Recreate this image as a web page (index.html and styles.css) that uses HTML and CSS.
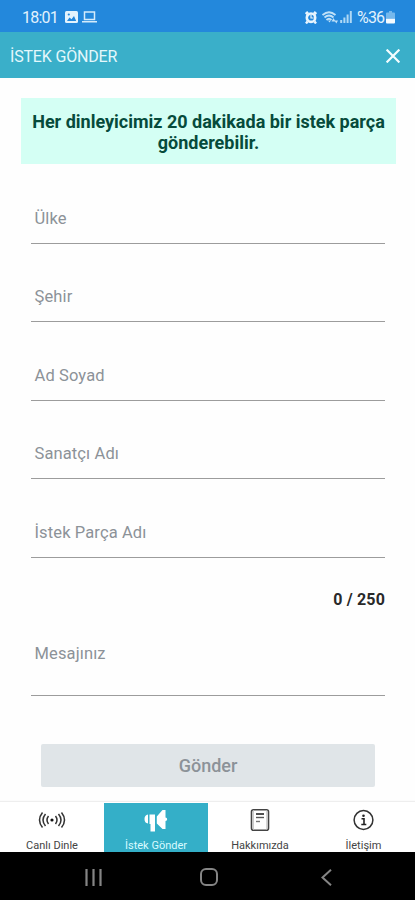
FILE: index.html
```html
<!DOCTYPE html>
<html lang="tr">
<head>
<meta charset="utf-8">
<title>İstek Gönder</title>
<link rel="stylesheet" href="styles.css">
</head>
<body>
<div class="status">
  <span class="time">18:01</span>
  <svg class="photo" width="13" height="12" viewBox="0 0 13 12"><rect width="13" height="12" rx="1.5" fill="#e3f3fd"/><path d="M2 10l2.5-3.5 2 1.8L9 5l2.2 5z" fill="#2388dc"/><circle cx="3.8" cy="3.5" r="1.1" fill="#2388dc"/></svg>
  <svg class="laptop" width="15" height="12" viewBox="0 0 15 12"><path d="M2.5 1h10v7.5h-10zM0 10.8h15" fill="none" stroke="#d3ebfb" stroke-width="1.5"/></svg>
  <span class="space"></span>
  <svg class="alarm" width="12" height="13" viewBox="0 0 12 13"><path d="M.7 3L3 .9M11.3 3L9 .9M2.500 10.500l-1.500 2M9.500 10.500l1.500 2" stroke="#e8f5fe" stroke-width="2.400"/><circle cx="6" cy="6.700" r="4.200" fill="none" stroke="#e8f5fe" stroke-width="2.600"/><path d="M6 4v3h2.500" fill="none" stroke="#e8f5fe" stroke-width="1.200"/></svg>
  <svg class="wifi" width="16" height="13" viewBox="0 0 16 13"><path d="M.5 4Q7 -1.500 13.500 4M2.500 6.500Q7 2.500 11.500 6.500M4.500 9Q7 6.500 9.500 9" fill="none" stroke="#c0e1f8" stroke-width="1.800"/><path d="M6 9.500h3l-1.500 2zM9.500 10.500l2-3.500 2 3.500zM12.500 9.500h3.500l-1.700 3z" fill="#c0e1f8"/></svg>
  <svg class="signal" width="12" height="12" viewBox="0 0 12 12"><path d="M1.200 9v3M4.400 6.500V12M7.600 3.500V12M10.800 0v12" stroke="#b0d9f5" stroke-width="2"/></svg>
  <span class="percent">%36</span>
  <svg class="battery" width="9" height="13" viewBox="0 0 9 13"><path d="M3 0h3v1.500h2a1 1 0 0 1 1 1V7H0V2.500a1 1 0 0 1 1-1h2z" fill="#75b8ec"/><path d="M0 7.500h9v4a1 1 0 0 1-1 1H1a1 1 0 0 1-1-1z" fill="#f4fbff"/></svg>
</div>
<header class="header">
  <h1>İSTEK GÖNDER</h1>
  <svg width="14" height="14" viewBox="0 0 14 14"><path d="M.6.6l12.800 12.800M13.400.6L.6 13.400" stroke="#f4fdff" stroke-width="2.200"/></svg>
</header>
<main class="main">
  <p class="notice">Her dinleyicimiz 20 dakikada bir istek parça<br>gönderebilir.</p>
  <div class="form">
    <div class="field first"><span>Ülke</span></div>
    <div class="field"><span>Şehir</span></div>
    <div class="field"><span>Ad Soyad</span></div>
    <div class="field"><span>Sanatçı Adı</span></div>
    <div class="field"><span>İstek Parça Adı</span></div>
    <div class="counter">0 / 250</div>
    <div class="field message"><span>Mesajınız</span></div>
  </div>
  <div class="submit"><span>Gönder</span></div>
</main>
<nav class="tabs">
  <div class="tab">
    <svg width="28" height="26" viewBox="0 0 28 26"><g fill="none" stroke="#333" stroke-width="1.500"><path d="M4.500 5.500Q-1.500 13 4.500 20.500M7.500 7Q2.500 13 7.500 19M10.500 9Q7.500 13 10.500 17M23.500 5.500Q29.500 13 23.500 20.500M20.500 7Q25.500 13 20.500 19M17.500 9Q20.500 13 17.500 17"/></g><circle cx="14" cy="13" r="1.600" fill="#111"/></svg>
    <span>Canlı Dinle</span>
  </div>
  <div class="tab active">
    <svg width="28" height="26" viewBox="0 0 28 26"><path d="M6 7.500v9Q2.500 16 2.500 12T6 7.500zM7.500 7.500h5.500v17H8.500v-7.500h-1zM14.800 9.500L20.500 3h3v7.500q1.700 0 1.700 1.700t-1.700 1.700V22h-3l-5.700-5.500z" fill="#fff"/></svg>
    <span>İstek Gönder</span>
  </div>
  <div class="tab">
    <svg width="28" height="26" viewBox="0 0 28 26"><rect x="5.500" y="2.700" width="17" height="20.500" rx="2" fill="none" stroke="#444" stroke-width="1.600"/><path d="M7.500 3.500v19M20.700 3.500v19" stroke="#ccc" stroke-width="1"/><path d="M10 7h8" stroke="#222" stroke-width="1.600"/><path d="M10 10.500h8" stroke="#555" stroke-width="1.400"/><path d="M10 14.500h4" stroke="#777" stroke-width="1.400"/></svg>
    <span>Hakkımızda</span>
  </div>
  <div class="tab">
    <svg width="28" height="26" viewBox="0 0 28 26"><circle cx="13.500" cy="13" r="9.400" fill="none" stroke="#333" stroke-width="1.500"/><circle cx="13.500" cy="8.700" r="1.300" fill="#222"/><path d="M11.500 11.700h2.500v5.500M11.300 17.500h5" fill="none" stroke="#222" stroke-width="1.600"/></svg>
    <span>İletişim</span>
  </div>
</nav>
<div class="system">
  <svg class="recent" width="17" height="17" viewBox="0 0 17 17"><path d="M1.500 0v17M8.500 0v17M15.500 0v17" stroke="#858585" stroke-width="2.200"/></svg>
  <svg class="home" width="18" height="18" viewBox="0 0 18 18"><rect x="1" y="1" width="16" height="16" rx="5" fill="none" stroke="#858585" stroke-width="2"/></svg>
  <svg class="back" width="11" height="17" viewBox="0 0 11 17"><path d="M10 .8L1.500 8.500 10 16.200" fill="none" stroke="#858585" stroke-width="2"/></svg>
</div>
</body>
</html>
```
FILE: styles.css
```css
* { box-sizing: border-box; }
body { margin: 0; width: 415px; height: 900px; display: flex; flex-direction: column; overflow: hidden; background: #fefefe; font-family: Roboto, sans-serif; }
svg { display: block; flex: none; }
.status { height: 32px; flex: none; background: #2388dc; color: #e2f2fd; display: flex; align-items: center; padding: 2px 20px 0 22px; font-size: 16px; line-height: 20px; }
.time { width: 43px; letter-spacing: -.8px; padding-top: 1px; }
.laptop { margin-left: 4px; }
.space { flex: 1; }
.wifi { margin-left: 5px; }
.signal { margin-left: 2px; }
.percent { margin-left: 5px; letter-spacing: -.8px; width: 29px; padding-top: 1px; }
.header { height: 46px; flex: none; background: #3aafc9; display: flex; align-items: center; justify-content: space-between; padding: 0 15px 0 10px; }
.header h1 { margin: 3px 0 0; color: #e4f8fc; font-size: 16px; font-weight: 400; line-height: 20px; letter-spacing: -.18px; }
.header svg { margin-top: 1px; }
.main { height: 724px; flex: none; padding-top: 20px; }
.notice { margin: 0 19px 0 21px; height: 66px; padding-top: 13px; background: #d4fff4; color: #064b3b; font-size: 18px; font-weight: 700; line-height: 21px; text-align: center; white-space: nowrap; }
.form { margin: 0 30px 0 31px; }
.field { height: 78.4px; border-bottom: 1px solid #9c9c9c; display: flex; align-items: flex-end; padding: 0 0 13px 3.5px; color: #8c9298; font-size: 16.5px; line-height: 22px; letter-spacing: .12px; }
.field.first { height: 80px; }
.counter { height: 52px; padding-top: 31px; text-align: right; font-size: 16px; line-height: 22px; font-weight: 700; letter-spacing: .15px; color: #292929; }
.field.message { height: 86.4px; padding-bottom: 29.5px; }
.submit { margin: 48px 40px 0 41px; height: 43px; border-radius: 2px; background: #e0e5e8; color: #8c9298; display: flex; align-items: center; justify-content: center; font-size: 18px; font-weight: 500; line-height: 22px; }
.submit span { padding-top: 2px; }
.tabs { height: 50px; flex: none; display: grid; grid-template-columns: 104px 104px 104px 103px; background: #fff; box-shadow: 0 -1px 1px #eee; }
.tab { display: flex; flex-direction: column; align-items: center; padding-top: 5px; color: #444; font-size: 11px; line-height: 14px; }
.tab span { margin-top: 6px; white-space: nowrap; }
.tab.active { background: #34afc8; color: #d9fbff; margin-top: 1px; padding-top: 4px; }
.system { height: 48px; flex: none; background: #000; display: flex; align-items: center; padding: 2px 0 0 85px; }
.home { margin-left: 98px; }
.back { margin-left: 103px; }
```
